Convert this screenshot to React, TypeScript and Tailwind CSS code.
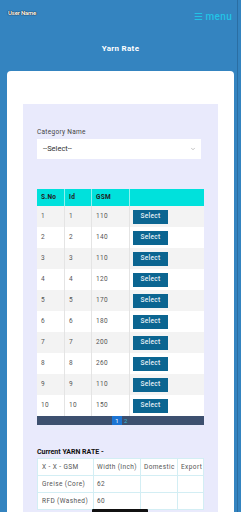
import { ChevronDown } from "lucide-react";

const ROWS = [
  { sno: 1, id: 1, gsm: 110 },
  { sno: 2, id: 2, gsm: 140 },
  { sno: 3, id: 3, gsm: 110 },
  { sno: 4, id: 4, gsm: 120 },
  { sno: 5, id: 5, gsm: 170 },
  { sno: 6, id: 6, gsm: 180 },
  { sno: 7, id: 7, gsm: 200 },
  { sno: 8, id: 8, gsm: 260 },
  { sno: 9, id: 9, gsm: 110 },
  { sno: 10, id: 10, gsm: 150 },
];

const RATES = [
  ["X - X - GSM", "Width (Inch)", "Domestic", "Export"],
  ["Greise (Core)", "62", "", ""],
  ["RFD (Washed)", "60", "", ""],
];

export default function App() {
  return (
    <div className="relative h-[512px] w-[241px] overflow-hidden bg-[#3484c0] font-['Roboto',sans-serif]">
      {/* Header */}
      <div className="flex items-start justify-between pl-2 pr-[9px] pt-[9px]">
        <span className="text-[6px] font-bold leading-[8px] tracking-[-0.2px] text-white [text-shadow:0_0_1px_#000,0_0_1px_#000]">
          User Name
        </span>
        <span className="mt-[2px] text-[10px] font-medium leading-[12px] tracking-[0.3px] text-[#22c3e6]">
          ☰ menu
        </span>
      </div>
      <div className="mt-[21px] text-center text-[8px] font-bold leading-[10px] tracking-[0.3px] text-white">
        Yarn Rate
      </div>

      {/* Card */}
      <div className="ml-[7px] mt-[17px] w-[227px] rounded-[4px] bg-white px-4 pt-[33px]">
        <div className="bg-[#e9eafc] px-[14px] pt-[24px] pb-10">
          <div className="text-[6.5px] leading-[8px] tracking-[0.3px] text-[#444]">Category Name</div>
          <div className="mt-[3px] mr-[3px] flex h-[20px] items-center justify-between bg-white pl-[6px] pr-[5px] text-[7.5px] text-[#333]">
            <span>--Select--</span>
            <ChevronDown className="h-[6px] w-[6px] text-[#888]" strokeWidth={2} />
          </div>

          {/* Grid */}
          <div className="mt-[30px] text-[6.5px] tracking-[0.3px] text-[#555]">
            <div className="flex h-[17px] items-center bg-[#00e1dc] font-bold text-[#222]">
              <div className="h-full w-[28px] border-r border-[#8ff1ee] pl-[4px] leading-[17px]">S.No</div>
              <div className="h-full w-[27px] border-r border-[#8ff1ee] pl-[4px] leading-[17px]">Id</div>
              <div className="h-full w-[38px] border-r border-[#8ff1ee] pl-[4px] leading-[17px]">GSM</div>
              <div className="h-full flex-1" />
            </div>
            {ROWS.map((r, i) => (
              <div
                key={r.sno}
                className={`flex h-[21px] items-center ${i % 2 === 0 ? "bg-[#f3f3f3]" : "bg-white"}`}
              >
                <div className="h-full w-[28px] border-r border-[#e4e4e4] pl-[4px] leading-[21px]">{r.sno}</div>
                <div className="h-full w-[27px] border-r border-[#e4e4e4] pl-[4px] leading-[21px]">{r.id}</div>
                <div className="h-full w-[38px] border-r border-[#e4e4e4] pl-[4px] leading-[21px]">{r.gsm}</div>
                <div className="flex h-full flex-1 items-center pl-[3px]">
                  <button className="h-[14px] w-[35px] bg-[#0b6591] text-[6.5px] font-medium tracking-[0.3px] text-[#e8f2f8]">
                    Select
                  </button>
                </div>
              </div>
            ))}
            <div className="flex h-[9px] items-center bg-[#3d506f] pl-[75px] text-[6px] leading-[9px]">
              <span className="w-[10px] bg-[#1c74d3] text-center text-white">1</span>
              <span className="ml-[2px] text-[#2fb5d8]">2</span>
            </div>
          </div>

          {/* Current rate */}
          <div className="mt-[23px] text-[7px] font-bold leading-[9px] text-[#111]">Current YARN RATE -</div>
          <div className="mt-[1px] border-l border-t border-[#d3eef4] bg-white text-[6.5px] tracking-[0.4px] text-[#555]">
            {RATES.map((row, i) => (
              <div key={i} className="flex h-[17px] border-b border-[#d3eef4]">
                <div className="w-[56px] border-r border-[#d3eef4] pl-[4px] leading-[17px]">{row[0]}</div>
                <div className="w-[47px] border-r border-[#d3eef4] pl-[3px] leading-[17px]">{row[1]}</div>
                <div className="w-[37px] border-r border-[#d3eef4] pl-[3px] leading-[17px]">{row[2]}</div>
                <div className="flex-1 border-r border-[#d3eef4] pl-[3px] leading-[17px]">{row[3]}</div>
              </div>
            ))}
          </div>
        </div>
      </div>

      {/* scrollbar line + home indicator */}
      <div className="absolute right-[3px] top-0 h-full w-[1px] bg-[#2a6ea3]" />
      <div className="absolute bottom-0 left-[92px] h-[3px] w-[56px] rounded-t-[1px] bg-[#111]" />
    </div>
  );
}
